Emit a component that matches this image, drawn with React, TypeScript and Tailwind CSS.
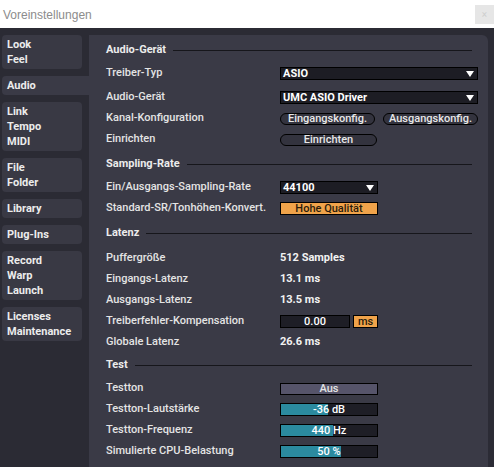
import type { ReactNode } from "react";

const tabs = [
  ["Look", "Feel"],
  ["Audio"],
  ["Link", "Tempo", "MIDI"],
  ["File", "Folder"],
  ["Library"],
  ["Plug-Ins"],
  ["Record", "Warp", "Launch"],
  ["Licenses", "Maintenance"],
];

function Heading({ title, className = "h-[26px] mt-[2px]" }: { title: string; className?: string }) {
  return (
    <div className={`flex items-center pr-[6px] ${className}`}>
      <span className="font-bold text-[#ececec]">{title}</span>
      <div className="ml-[7px] h-px flex-1 bg-[#16161b]" />
    </div>
  );
}

function Row({
  label,
  children,
  className = "",
}: {
  label: string;
  children?: ReactNode;
  className?: string;
}) {
  return (
    <div className={`flex h-[21px] items-center ${className}`}>
      <div className="w-[174px] shrink-0 font-medium text-[#e4e4e4]">{label}</div>
      <div className="flex items-center">{children}</div>
    </div>
  );
}

function Value({ text }: { text: string }) {
  return <span className="font-bold text-[#f2f2f2]">{text}</span>;
}

function Dropdown({ value, width }: { value: string; width: string }) {
  return (
    <div
      className={`flex h-[13px] ${width} items-center justify-between border border-black bg-[#1d1d24] pl-[2px] pr-[3px] text-white`}
    >
      <span className="font-bold leading-none">{value}</span>
      <svg width="8" height="6" viewBox="0 0 8 6">
        <path d="M0 0h8L4 6z" fill="#fff" />
      </svg>
    </div>
  );
}

function Pill({ label, width }: { label: string; width: string }) {
  return (
    <div
      className={`flex h-[12px] ${width} items-center justify-center rounded-full border border-black bg-[#33333e] font-medium leading-none text-[#e8e8e8]`}
    >
      {label}
    </div>
  );
}

function Slider({ value, fill }: { value: string; fill: number }) {
  return (
    <div className="relative h-[13px] w-[98px] border border-black bg-[#1e1e26]">
      <div className="absolute inset-y-0 left-0 bg-[#2b8a9f]" style={{ width: `${fill}px` }} />
      <div className="relative flex h-full items-center justify-center font-medium leading-none text-white">
        {value}
      </div>
    </div>
  );
}

export default function App() {
  return (
    <div
      className="flex h-[467px] w-[494px] flex-col overflow-hidden bg-[#2b2b34] text-[11px]"
      style={{ fontFamily: "Roboto, 'Noto Sans', sans-serif" }}
    >
      {/* title bar */}
      <div className="flex h-[28px] shrink-0 items-start justify-between bg-white">
        <span
          className="mt-[6px] pl-[3px] text-[12px] text-[#8c8c8c]"
          style={{ fontFamily: "'Liberation Sans', Arial, sans-serif" }}
        >
          Voreinstellungen
        </span>
        <div className="mt-[5px] flex h-[19px] w-[19px] items-center justify-center bg-[#e6e6e6] text-[10px] text-[#cfcfcf]">
          ×
        </div>
      </div>

      <div className="flex flex-1 pt-[7px]">
        {/* sidebar */}
        <div className="flex w-[89px] shrink-0 flex-col gap-[7px] pl-[2px]">
          {tabs.map((lines) => {
            const active = lines[0] === "Audio";
            return (
              <div
                key={lines[0]}
                className={`py-[2px] pl-[5px] font-bold leading-[15px] text-[#ececec] ${
                  active ? "rounded-l-[4px] bg-[#3a3a46]" : "mr-[7px] rounded-[4px] bg-[#393944]"
                }`}
              >
                {lines.map((l) => (
                  <div key={l}>{l}</div>
                ))}
              </div>
            );
          })}
        </div>

        {/* main panel */}
        <div className="flex-1 rounded-tr-[6px] bg-[#3a3a46] pl-[17px] pr-[10px] pt-[2px]">
          <Heading title="Audio-Gerät" className="h-[26px]" />
          <Row label="Treiber-Typ">
            <Dropdown value="ASIO" width="w-[198px]" />
          </Row>
          <Row label="Audio-Gerät" className="mt-[3px]">
            <Dropdown value="UMC ASIO Driver" width="w-[198px]" />
          </Row>
          <Row label="Kanal-Konfiguration">
            <div className="flex gap-[8px]">
              <Pill label="Eingangskonfig." width="w-[95px]" />
              <Pill label="Ausgangskonfig." width="w-[95px]" />
            </div>
          </Row>
          <Row label="Einrichten">
            <Pill label="Einrichten" width="w-[97px]" />
          </Row>

          <Heading title="Sampling-Rate" className="h-[26px] mt-[1px]" />
          <Row label="Ein/Ausgangs-Sampling-Rate">
            <Dropdown value="44100" width="w-[98px]" />
          </Row>
          <Row label="Standard-SR/Tonhöhen-Konvert.">
            <div className="flex h-[13px] w-[98px] items-center justify-center border border-black bg-[#f0a34a] font-medium leading-none text-[#2a1c0c]">
              Hohe Qualität
            </div>
          </Row>

          <Heading title="Latenz" className="h-[27px] mt-[1px]" />
          <Row label="Puffergröße" className="mt-[1px]">
            <Value text="512 Samples" />
          </Row>
          <Row label="Eingangs-Latenz">
            <Value text="13.1 ms" />
          </Row>
          <Row label="Ausgangs-Latenz">
            <Value text="13.5 ms" />
          </Row>
          <Row label="Treiberfehler-Kompensation">
            <div className="flex gap-[3px]">
              <div className="flex h-[13px] w-[70px] items-center justify-center border border-black bg-[#1e1e26] font-medium leading-none text-white">
                0.00
              </div>
              <div className="flex h-[13px] w-[25px] items-center justify-center border border-black bg-[#f0a34a] font-medium leading-none text-[#2a1c0c]">
                ms
              </div>
            </div>
          </Row>
          <Row label="Globale Latenz">
            <Value text="26.6 ms" />
          </Row>

          <Heading title="Test" className="h-[25px]" />
          <Row label="Testton">
            <div className="flex h-[12px] w-[98px] items-center justify-center border border-black bg-[#56546a] font-medium leading-none text-[#e4e4e4]">
              Aus
            </div>
          </Row>
          <Row label="Testton-Lautstärke">
            <Slider value="-36 dB" fill={47} />
          </Row>
          <Row label="Testton-Frequenz">
            <Slider value="440 Hz" fill={52} />
          </Row>
          <Row label="Simulierte CPU-Belastung">
            <Slider value="50 %" fill={60} />
          </Row>
        </div>
        <div className="w-[7px] shrink-0 bg-[#2b2b35]" />
      </div>
    </div>
  );
}
